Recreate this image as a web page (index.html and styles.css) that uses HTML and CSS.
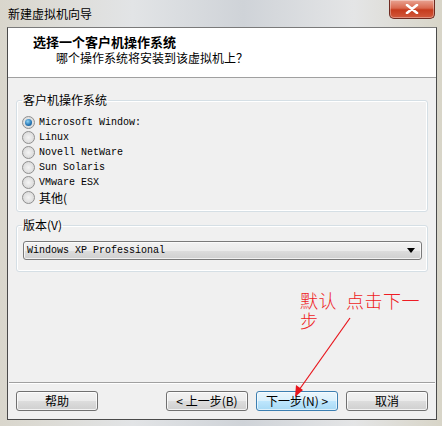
FILE: index.html
```html
<!DOCTYPE html>
<html>
<head>
<meta charset="utf-8">
<link rel="stylesheet" href="styles.css">
</head>
<body>
<div class="window">
  <div class="titlebar">
    <span class="title">新建虚拟机向导</span>
    <div class="close"><svg width="14" height="10" viewBox="0 0 14 10"><path d="M2 1 L12 9 M12 1 L2 9" stroke="#fff" stroke-width="2.6" stroke-linecap="round"/></svg></div>
  </div>
  <div class="client">
    <div class="header">
      <div class="h-title">选择一个客户机操作系统</div>
      <div class="h-sub">哪个操作系统将安装到该虚拟机上？</div>
    </div>
    <div class="body">
      <fieldset class="group g1">
        <legend>客户机操作系统</legend>
        <div class="opt"><span class="radio checked"></span><span class="mono">Microsoft Window:</span></div>
        <div class="opt"><span class="radio"></span><span class="mono">Linux</span></div>
        <div class="opt"><span class="radio"></span><span class="mono">Novell NetWare</span></div>
        <div class="opt"><span class="radio"></span><span class="mono">Sun Solaris</span></div>
        <div class="opt"><span class="radio"></span><span class="mono">VMware ESX</span></div>
        <div class="opt"><span class="radio"></span><span class="cn-opt">其他(</span></div>
      </fieldset>
      <fieldset class="group g2">
        <legend>版本(V)</legend>
        <div class="combo">
          <span class="mono">Windows XP Professional</span>
          <svg width="8" height="5" viewBox="0 0 8 5"><path d="M0 0 H8 L4 5 Z" fill="#000"/></svg>
        </div>
      </fieldset>
      <div class="spacer"></div>
      <div class="sep"></div>
      <div class="buttons">
        <button class="btn">帮助</button>
        <div class="right">
          <button class="btn">&lt; 上一步(B)</button>
          <button class="btn primary">下一步(N) &gt;</button>
          <button class="btn">取消</button>
        </div>
      </div>
    </div>
  </div>
  <div class="note">
    <div class="note-line">默认&nbsp; 点击下一</div>
    <div class="note-line">步</div>
  </div>
  <svg class="arrow" width="442" height="426" viewBox="0 0 442 426">
    <line x1="350" y1="318" x2="299" y2="390" stroke="#e8141b" stroke-width="1.2"/>
    <path d="M295 397 L296 385 L303 390 Z" fill="#e8141b"/>
  </svg>
</div>
</body>
</html>
```
FILE: styles.css
```css
* { box-sizing: border-box; }
html, body { margin: 0; padding: 0; }
body {
  width: 442px; height: 426px; overflow: hidden;
  font-family: "Noto Sans CJK SC", "Liberation Sans", sans-serif;
  font-size: 12px; color: #000;
}
.window {
  position: relative;
  width: 442px; height: 426px;
  display: flex; flex-direction: column;
  padding: 0 5px 6px 7px;
  background: linear-gradient(90deg, #d9d6cc 0%, #e2e4e6 30%, #cfd3d8 55%, #e4e5e6 80%, #d8d5c8 100%);
}
.titlebar {
  height: 27px; flex: none;
  display: flex; align-items: flex-start; justify-content: space-between;
  position: relative;
}
.title { margin-top: 6px; margin-left: 1px; font-size: 12px; line-height: 16px; color: #000; }
.close {
  width: 46px; height: 19px; margin-right: 2px;
  border: 1px solid #6e2a20; border-top: none;
  border-radius: 0 0 5px 5px;
  background: linear-gradient(#e9a493 0%, #d9694f 45%, #c63b1d 55%, #d2593c 100%);
  display: flex; align-items: center; justify-content: center;
  box-shadow: inset 0 0 0 1px rgba(255,255,255,0.35);
}
.client {
  flex: 1;
  display: flex; flex-direction: column;
  border: 1px solid #4a4a4a;
  border-top-color: #7a7a7a;
  background: #f0f0f0;
}
.header {
  height: 50px; flex: none;
  background: #fff;
  border-bottom: 1px solid #a0a0a0;
  padding: 5px 0 0 25px;
}
.h-title { font-weight: bold; font-size: 13px; line-height: 17px; }
.h-sub { margin-left: 23px; font-size: 12px; line-height: 15px; }
.body { flex: 1; display: flex; flex-direction: column; }
.group {
  margin: 14px 8px 0 8px;
  padding: 0 0 6px 5px;
  border: 1px solid #d5dfe5;
  border-radius: 3px;
  box-shadow: inset 0 0 0 1px #fff;
  min-width: 0;
}
.group legend { padding: 0 1px; font-size: 12px; line-height: 16px; }
.g2 { margin-top: 5px; padding-bottom: 11px; }
.opt { height: 15px; display: flex; align-items: center; gap: 4px; }
.g1 legend + .opt { margin-top: 7px; }
.radio {
  width: 13px; height: 13px; border-radius: 50%; flex: none;
  border: 1px solid #8f8f8f;
  background: radial-gradient(circle at 50% 50%, #f4f4f4 0%, #dcdcdc 70%, #c8c8c8 100%);
  position: relative;
}
.radio.checked::after {
  content: ""; position: absolute; left: 2px; top: 2px; width: 7px; height: 7px; border-radius: 50%;
  background: radial-gradient(circle at 40% 35%, #8fd3f5 0%, #2a7ab8 55%, #0d4a80 100%);
}
.mono { font-family: "Liberation Mono", monospace; font-size: 10px; line-height: 12px; white-space: pre; }
.cn-opt { font-size: 12px; line-height: 15px; }
.combo {
  margin: 8px 5px 0 1px;
  height: 19px;
  border: 1px solid #7a7a7a;
  border-radius: 3px;
  background: linear-gradient(#f2f2f2 0%, #ebebeb 50%, #dddddd 51%, #cfcfcf 100%);
  box-shadow: inset 0 0 0 1px rgba(255,255,255,0.7);
  display: flex; align-items: center; justify-content: space-between;
  padding: 0 6px 0 3px;
}
.spacer { flex: 1; }
.sep { height: 1px; background: #a0a0a0; margin: 0 1px; box-shadow: 0 1px 0 #fff; }
.buttons {
  flex: none;
  display: flex; justify-content: space-between;
  padding: 8px 8px 8px 8px;
}
.right { display: flex; gap: 8px; }
.btn {
  width: 82px; height: 20px; padding: 0; margin: 0;
  font-family: "Noto Sans CJK SC", "Liberation Sans", sans-serif;
  font-size: 12px; line-height: 16px; color: #000;
  border: 1px solid #707070; border-radius: 3px;
  background: linear-gradient(#f2f2f2 0%, #ebebeb 50%, #dddddd 51%, #cfcfcf 100%);
  box-shadow: inset 0 0 0 1px rgba(255,255,255,0.75);
}
.btn.primary {
  border-color: #3c7fb1;
  background: linear-gradient(#eaf6fd 0%, #d9f0fc 50%, #bee6fd 51%, #a7d9f5 100%);
  box-shadow: inset 0 0 0 1px rgba(255,255,255,0.6);
}
.note {
  position: absolute; left: 300px; top: 292px;
  color: #ee1c24;
  font-size: 18px; letter-spacing: 0.5px;
  font-weight: 300;
}
.note-line { height: 20px; line-height: 17px; }
.arrow { position: absolute; left: 0; top: 0; pointer-events: none; }
```
